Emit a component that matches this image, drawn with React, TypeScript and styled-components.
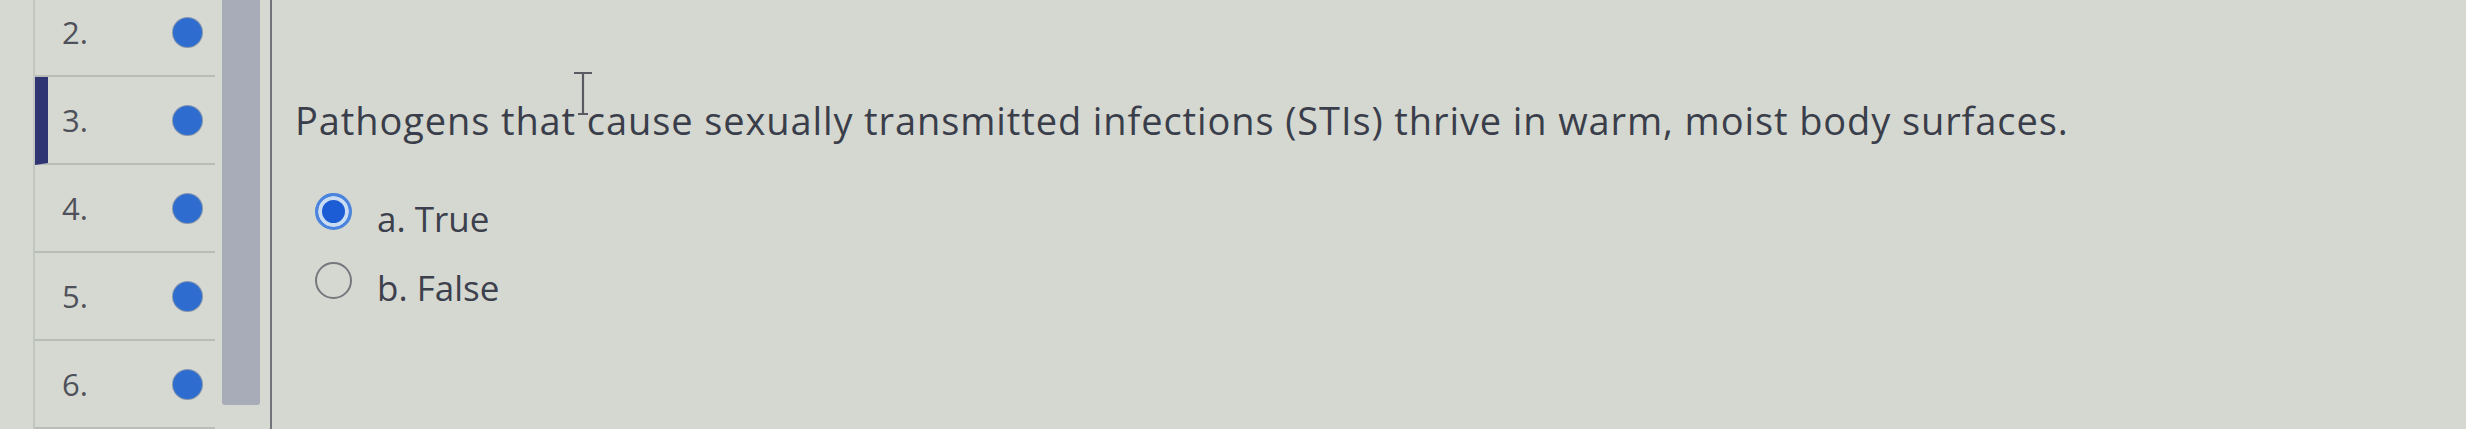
import React from "react";
import styled, { createGlobalStyle } from "styled-components";

const GlobalStyle = createGlobalStyle`
  html, body {
    margin: 0;
    padding: 0;
    background: #d5d8d0;
  }
  * { box-sizing: border-box; }
`;

const Page = styled.div`
  display: flex;
  width: 2466px;
  height: 429px;
  overflow: hidden;
  background: #d5d8d0;
  font-family: "Open Sans", "Noto Sans", sans-serif;
`;

const Sidebar = styled.aside`
  display: flex;
  width: 272px;
  flex-shrink: 0;
  border-right: 2px solid #72747c;
  background: #d6d9d2;
`;

const Gutter = styled.div`
  width: 35px;
  flex-shrink: 0;
  border-right: 2px solid #c2c6c0;
`;

const QuestionList = styled.ol`
  list-style: none;
  margin: -11px 0 0 0;
  padding: 0;
  width: 180px;
  flex-shrink: 0;
  display: flex;
  flex-direction: column;
`;

const Row = styled.li<{ $active?: boolean }>`
  height: 88px;
  flex-shrink: 0;
  display: flex;
  align-items: center;
  justify-content: space-between;
  padding: 0 13px 0 ${(p) => (p.$active ? "14px" : "27px")};
  border-bottom: 2px solid #b9bdb7;
  border-left: ${(p) => (p.$active ? "13px solid #2f3572" : "0")};
`;

const Num = styled.span`
  font-size: 31px;
  line-height: 1;
  color: #4f515a;
`;

const Dot = styled.span`
  width: 29px;
  height: 29px;
  border-radius: 50%;
  background: #2e6dcf;
  box-shadow: 0 0 0 1px rgba(40, 70, 130, 0.45);
`;

const ScrollTrack = styled.div`
  width: 38px;
  height: 405px;
  margin-left: 7px;
  background: #a8acb8;
  border-radius: 0 0 3px 3px;
`;

const Main = styled.main`
  position: relative;
  flex: 1;
  padding: 94px 0 0 23px;
  background: #d5d8d0;
`;

const Question = styled.p`
  margin: 0;
  font-size: 38px;
  line-height: 52px;
  color: #3a3e4b;
  letter-spacing: 0.9px;
  white-space: nowrap;
`;

const Options = styled.div`
  display: flex;
  flex-direction: column;
  gap: 21px;
  margin: 49px 0 0 20px;
`;

const Option = styled.label`
  display: flex;
  align-items: center;
  height: 48px;
  gap: 25px;
`;

const Radio = styled.span<{ $checked?: boolean }>`
  width: 37px;
  height: 37px;
  margin-bottom: 16px;
  border-radius: 50%;
  flex-shrink: 0;
  border: ${(p) => (p.$checked ? "3px solid #4a84de" : "2.5px solid #76787e")};
  background: ${(p) => (p.$checked ? "#1c5dd5" : "transparent")};
  box-shadow: ${(p) => (p.$checked ? "inset 0 0 0 4px #c9dcf2" : "none")};
`;

const OptionLabel = styled.span`
  font-size: 35px;
  line-height: 48px;
  color: #3c404d;
`;

const Cursor = styled.svg`
  position: absolute;
  left: 301px;
  top: 71px;
  pointer-events: none;
`;

const numbers = [2, 3, 4, 5, 6];

export default function App() {
  return (
    <>
      <GlobalStyle />
      <Page>
        <Sidebar>
          <Gutter />
          <QuestionList>
            {numbers.map((n) => (
              <Row key={n} $active={n === 3}>
                <Num>{n}.</Num>
                <Dot />
              </Row>
            ))}
          </QuestionList>
          <ScrollTrack />
        </Sidebar>
        <Main>
          <Question>
            Pathogens that cause sexually transmitted infections (STIs) thrive in warm, moist body surfaces.
          </Question>
          <Options>
            <Option>
              <Radio $checked />
              <OptionLabel>a. True</OptionLabel>
            </Option>
            <Option>
              <Radio />
              <OptionLabel>b. False</OptionLabel>
            </Option>
          </Options>
          <Cursor width="20" height="46" viewBox="0 0 20 46">
            <path d="M1 2 H19 M10 2 V43 M5 43 H15" stroke="#5a5a62" strokeWidth="2.2" fill="none" />
          </Cursor>
        </Main>
      </Page>
    </>
  );
}
